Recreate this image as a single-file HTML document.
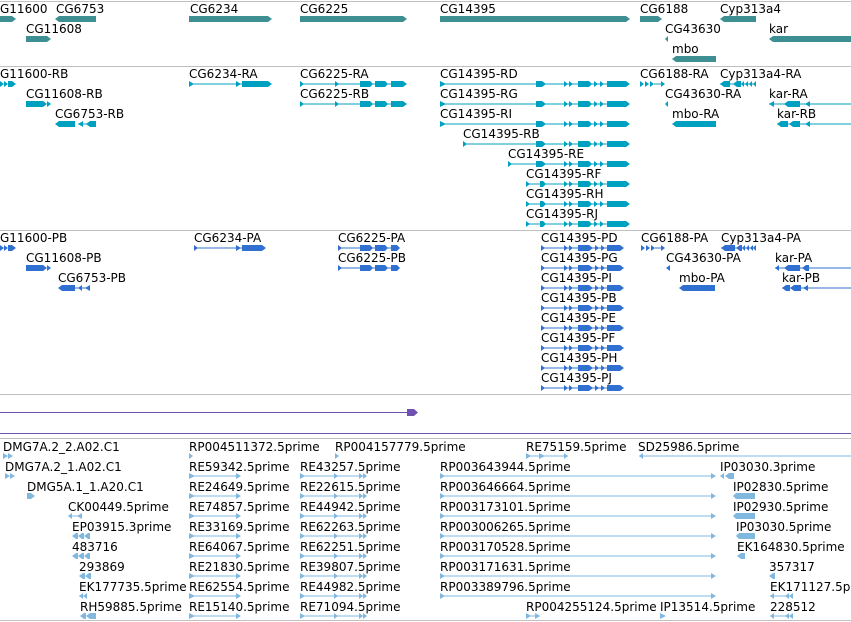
<!DOCTYPE html>
<html><head><meta charset="utf-8"><style>
html,body{margin:0;padding:0;background:#fff;width:851px;height:622px;overflow:hidden}
svg{display:block}
text{font-family:"DejaVu Sans","Liberation Sans",sans-serif;font-size:12px;fill:#000}
</style></head><body>
<svg width="851" height="622" viewBox="0 0 851 622" xmlns="http://www.w3.org/2000/svg">
<!-- dividers -->
<g fill="#c0c0c0">
<rect x="0" y="1" width="851" height="1"/>
<rect x="0" y="66" width="851" height="1"/>
<rect x="0" y="230" width="851" height="1"/>
<rect x="0" y="394" width="851" height="1"/>
<rect x="0" y="438" width="851" height="1"/>
<rect x="0" y="620" width="851" height="1"/>
</g>
<rect x="0" y="433" width="851" height="1" fill="#7050b0"/>

<!-- TRACK 1 genes -->
<g fill="#3d8f91">
<polygon points="0,16 12,16 16,19 12,22 0,22"/>
<polygon points="55,19 59,16 96,16 96,22 59,22"/>
<polygon points="189,16 268,16 272,19 268,22 189,22"/>
<polygon points="300,16 403,16 407,19 403,22 300,22"/>
<polygon points="440,16 626,16 630,19 626,22 440,22"/>
<polygon points="640,16 658,16 662,19 658,22 640,22"/>
<polygon points="720,19 724,16 756,16 756,22 724,22"/>
<polygon points="26,36 47,36 51,39 47,42 26,42"/>
<polygon points="665,39 668,36 668,42"/>
<polygon points="769,39 773,36 851,36 851,42 773,42"/>
<polygon points="672,59 676,56 716,56 716,62 676,62"/>
</g>
<g>
<text x="0" y="13">G11600</text><text x="56" y="13">CG6753</text><text x="190" y="13">CG6234</text>
<text x="300" y="13">CG6225</text><text x="440" y="13">CG14395</text><text x="640" y="13">CG6188</text>
<text x="720" y="13">Cyp313a4</text>
<text x="26" y="33">CG11608</text><text x="665" y="33">CG43630</text><text x="769" y="33">kar</text>
<text x="672" y="53">mbo</text>
</g>

<!-- TRACK 2 transcripts -->
<g fill="#00a0c0" stroke="none">
<!-- row 84 -->
<g transform="translate(0,84)">
<polygon points="0,-3 4,0 0,3"/><polygon points="4,-3 8,0 4,3"/><polygon points="8,-3 12,-3 16,0 12,3 8,3"/>
<rect x="189" y="-0.5" width="80" height="1"/><polygon points="189,-3 194,0 189,3"/><polygon points="236,-3 241,0 236,3"/><polygon points="242,-3 268,-3 272,0 268,3 242,3"/>
</g>
<g transform="translate(0,104)">
<polygon points="26,-3 43,-3 47,0 43,3 26,3"/><polygon points="47,-3 51,0 47,3"/>
</g>
<g transform="translate(0,124)">
<polygon points="55,0 59,-3 75,-3 75,3 59,3"/><polygon points="78,0 83,-3 83,3"/><rect x="78" y="-0.5" width="18" height="1"/><polygon points="86,0 90,-3 96,-3 96,3 90,3"/>
</g>
<!-- CG6225-RA / RB -->
<g transform="translate(0,84)"><rect x="300" y="-0.5" width="105" height="1"/><polygon points="300,-3 304,0 300,3"/><polygon points="335,-3 339,0 335,3"/><polygon points="360,-3 370,-3 373,0 370,3 360,3"/><polygon points="375,-3 385,-3 388,0 385,3 375,3"/><polygon points="391,-3 403,-3 407,0 403,3 391,3"/></g>
<g transform="translate(0,104)"><rect x="300" y="-0.5" width="105" height="1"/><polygon points="300,-3 304,0 300,3"/><polygon points="335,-3 339,0 335,3"/><polygon points="360,-3 370,-3 373,0 370,3 360,3"/><polygon points="375,-3 385,-3 388,0 385,3 375,3"/><polygon points="391,-3 403,-3 407,0 403,3 391,3"/></g>
<!-- CG14395 R-rows -->
<g transform="translate(0,84)"><rect x="440" y="-0.5" width="188" height="1"/><polygon points="440,-3 446,0 440,3"/><polygon points="536,-3 542,-3 546,0 542,3 536,3"/><polygon points="564,-3 568,0 564,3"/><polygon points="569,-3 573,0 569,3"/><polygon points="578,-3 589,-3 592,0 589,3 578,3"/><polygon points="594,-3 598,0 594,3"/><polygon points="600,-3 604,0 600,3"/><polygon points="607,-3 626,-3 630,0 626,3 607,3"/></g>
<g transform="translate(0,104)"><rect x="440" y="-0.5" width="188" height="1"/><polygon points="440,-3 446,0 440,3"/><polygon points="536,-3 542,-3 546,0 542,3 536,3"/><polygon points="564,-3 568,0 564,3"/><polygon points="569,-3 573,0 569,3"/><polygon points="578,-3 589,-3 592,0 589,3 578,3"/><polygon points="594,-3 598,0 594,3"/><polygon points="600,-3 604,0 600,3"/><polygon points="607,-3 626,-3 630,0 626,3 607,3"/></g>
<g transform="translate(0,124)"><rect x="440" y="-0.5" width="188" height="1"/><polygon points="440,-3 446,0 440,3"/><polygon points="536,-3 542,-3 546,0 542,3 536,3"/><polygon points="564,-3 568,0 564,3"/><polygon points="569,-3 573,0 569,3"/><polygon points="578,-3 589,-3 592,0 589,3 578,3"/><polygon points="594,-3 598,0 594,3"/><polygon points="600,-3 604,0 600,3"/><polygon points="607,-3 626,-3 630,0 626,3 607,3"/></g>
<g transform="translate(0,144)"><rect x="463" y="-0.5" width="165" height="1"/><polygon points="463,-3 467,0 463,3"/><polygon points="536,-3 542,-3 546,0 542,3 536,3"/><polygon points="564,-3 568,0 564,3"/><polygon points="569,-3 573,0 569,3"/><polygon points="578,-3 589,-3 592,0 589,3 578,3"/><polygon points="594,-3 598,0 594,3"/><polygon points="600,-3 604,0 600,3"/><polygon points="607,-3 626,-3 630,0 626,3 607,3"/></g>
<g transform="translate(0,164)"><rect x="508" y="-0.5" width="120" height="1"/><polygon points="508,-3 512,0 508,3"/><polygon points="536,-3 542,-3 546,0 542,3 536,3"/><polygon points="564,-3 568,0 564,3"/><polygon points="569,-3 573,0 569,3"/><polygon points="578,-3 589,-3 592,0 589,3 578,3"/><polygon points="594,-3 598,0 594,3"/><polygon points="600,-3 604,0 600,3"/><polygon points="607,-3 626,-3 630,0 626,3 607,3"/></g>
<g transform="translate(0,184)"><rect x="526" y="-0.5" width="102" height="1"/><polygon points="526,-3 530,0 526,3"/><polygon points="540,-3 543,-3 546,0 543,3 540,3"/><polygon points="564,-3 568,0 564,3"/><polygon points="569,-3 573,0 569,3"/><polygon points="578,-3 589,-3 592,0 589,3 578,3"/><polygon points="594,-3 598,0 594,3"/><polygon points="600,-3 604,0 600,3"/><polygon points="607,-3 626,-3 630,0 626,3 607,3"/></g>
<g transform="translate(0,204)"><rect x="526" y="-0.5" width="102" height="1"/><polygon points="526,-3 530,0 526,3"/><polygon points="540,-3 543,-3 546,0 543,3 540,3"/><polygon points="564,-3 568,0 564,3"/><polygon points="569,-3 573,0 569,3"/><polygon points="578,-3 589,-3 592,0 589,3 578,3"/><polygon points="594,-3 598,0 594,3"/><polygon points="600,-3 604,0 600,3"/><polygon points="607,-3 626,-3 630,0 626,3 607,3"/></g>
<g transform="translate(0,224)"><rect x="526" y="-0.5" width="102" height="1"/><polygon points="526,-3 530,0 526,3"/><polygon points="540,-3 543,-3 546,0 543,3 540,3"/><polygon points="564,-3 568,0 564,3"/><polygon points="569,-3 573,0 569,3"/><polygon points="578,-3 589,-3 592,0 589,3 578,3"/><polygon points="594,-3 598,0 594,3"/><polygon points="600,-3 604,0 600,3"/><polygon points="607,-3 626,-3 630,0 626,3 607,3"/></g>
<!-- right side -->
<g transform="translate(0,84)"><polygon points="640,-3 644,0 640,3"/><polygon points="645,-3 649,0 645,3"/><polygon points="650,-3 654,0 650,3"/><rect x="654" y="-0.5" width="8" height="1"/><polygon points="661,-3 665,0 661,3"/>
<polygon points="720,0 724,-3 730,-3 730,3 724,3"/><rect x="720" y="-0.5" width="36" height="1"/><polygon points="733,0 737,-3 741,-3 741,3 737,3"/><polygon points="741,0 744,-3 744,3"/><polygon points="745,0 748,-3 748,3"/><polygon points="749,0 752,-3 752,3"/><polygon points="753,0 756,-3 756,3"/></g>
<g transform="translate(0,104)"><polygon points="665,0 668,-3 668,3"/><rect x="769" y="-0.5" width="82" height="1"/><polygon points="769,0 774,-3 774,3"/><polygon points="784,0 788,-3 800,-3 800,3 788,3"/><polygon points="805,0 810,-3 810,3"/></g>
<g transform="translate(0,124)"><polygon points="672,0 676,-3 716,-3 716,3 676,3"/><rect x="777" y="-0.5" width="74" height="1"/><polygon points="777,0 781,-3 788,-3 788,3 781,3"/><polygon points="789,0 793,-3 800,-3 800,3 793,3"/><polygon points="805,0 810,-3 810,3"/></g>
</g>
<g>
<text x="0" y="78">G11600-RB</text><text x="189" y="78">CG6234-RA</text><text x="300" y="78">CG6225-RA</text><text x="440" y="78">CG14395-RD</text><text x="640" y="78">CG6188-RA</text><text x="720" y="78">Cyp313a4-RA</text>
<text x="26" y="98">CG11608-RB</text><text x="300" y="98">CG6225-RB</text><text x="440" y="98">CG14395-RG</text><text x="665" y="98">CG43630-RA</text><text x="769" y="98">kar-RA</text>
<text x="55" y="118">CG6753-RB</text><text x="440" y="118">CG14395-RI</text><text x="672" y="118">mbo-RA</text><text x="777" y="118">kar-RB</text>
<text x="463" y="138">CG14395-RB</text>
<text x="508" y="158">CG14395-RE</text>
<text x="526" y="178">CG14395-RF</text>
<text x="526" y="198">CG14395-RH</text>
<text x="526" y="218">CG14395-RJ</text>
</g>

<!-- TRACK 3 proteins -->
<g fill="#3070d0">
<g transform="translate(0,248)"><polygon points="0,-3 4,0 0,3"/><polygon points="4,-3 8,0 4,3"/><polygon points="8,-3 12,-3 16,0 12,3 8,3"/>
<rect x="194" y="-0.5" width="70" height="1"/><polygon points="194,-3 198,0 194,3"/><polygon points="236,-3 241,0 236,3"/><polygon points="242,-3 262,-3 266,0 262,3 242,3"/>
<rect x="338" y="-0.5" width="60" height="1"/><polygon points="338,-3 342,0 338,3"/><polygon points="360,-3 370,-3 373,0 370,3 360,3"/><polygon points="375,-3 385,-3 388,0 385,3 375,3"/><polygon points="391,-3 397,-3 400,0 397,3 391,3"/>
<polygon points="641,-3 645,0 641,3"/><polygon points="646,-3 650,0 646,3"/><polygon points="651,-3 655,0 651,3"/><rect x="655" y="-0.5" width="8" height="1"/><polygon points="661,-3 665,0 661,3"/>
<polygon points="721,0 725,-3 735,-3 735,3 725,3"/><rect x="721" y="-0.5" width="35" height="1"/><polygon points="736,0 740,-3 742,-3 742,3 740,3"/><polygon points="742,0 745,-3 745,3"/><polygon points="746,0 749,-3 749,3"/><polygon points="750,0 753,-3 753,3"/><polygon points="753,0 756,-3 756,3"/></g>
<g transform="translate(0,268)"><polygon points="26,-3 43,-3 47,0 43,3 26,3"/><polygon points="47,-3 51,0 47,3"/>
<rect x="338" y="-0.5" width="60" height="1"/><polygon points="338,-3 342,0 338,3"/><polygon points="360,-3 370,-3 373,0 370,3 360,3"/><polygon points="375,-3 385,-3 388,0 385,3 375,3"/><polygon points="391,-3 397,-3 400,0 397,3 391,3"/>
<polygon points="666,0 670,-3 670,3"/>
<rect x="775" y="-0.5" width="76" height="1"/><polygon points="775,0 779,-3 779,3"/><polygon points="784,0 788,-3 800,-3 800,3 788,3"/><polygon points="802,0 806,-3 809,-3 809,3 806,3"/></g>
<g transform="translate(0,288)"><polygon points="58,0 62,-3 75,-3 75,3 62,3"/><rect x="75" y="-0.5" width="15" height="1"/><polygon points="78,0 82,-3 82,3"/><polygon points="85,0 90,-3 90,3"/>
<polygon points="679,0 683,-3 715,-3 715,3 683,3"/>
<rect x="782" y="-0.5" width="69" height="1"/><polygon points="782,0 786,-3 790,-3 790,3 786,3"/><polygon points="790,0 794,-3 801,-3 801,3 794,3"/><polygon points="803,0 808,-3 808,3"/></g>
<!-- CG14395-P rows -->
<g transform="translate(0,248)"><rect x="541" y="-0.5" width="82" height="1"/><polygon points="541,-3 545,0 541,3"/><polygon points="564,-3 568,0 564,3"/><polygon points="569,-3 573,0 569,3"/><polygon points="578,-3 589,-3 593,0 589,3 578,3"/><polygon points="595,-3 599,0 595,3"/><polygon points="601,-3 605,0 601,3"/><polygon points="607,-3 620,-3 624,0 620,3 607,3"/></g>
<g transform="translate(0,268)"><rect x="541" y="-0.5" width="82" height="1"/><polygon points="541,-3 545,0 541,3"/><polygon points="564,-3 568,0 564,3"/><polygon points="569,-3 573,0 569,3"/><polygon points="578,-3 589,-3 593,0 589,3 578,3"/><polygon points="595,-3 599,0 595,3"/><polygon points="601,-3 605,0 601,3"/><polygon points="607,-3 620,-3 624,0 620,3 607,3"/></g>
<g transform="translate(0,288)"><rect x="541" y="-0.5" width="82" height="1"/><polygon points="541,-3 545,0 541,3"/><polygon points="564,-3 568,0 564,3"/><polygon points="569,-3 573,0 569,3"/><polygon points="578,-3 589,-3 593,0 589,3 578,3"/><polygon points="595,-3 599,0 595,3"/><polygon points="601,-3 605,0 601,3"/><polygon points="607,-3 620,-3 624,0 620,3 607,3"/></g>
<g transform="translate(0,308)"><rect x="541" y="-0.5" width="82" height="1"/><polygon points="541,-3 545,0 541,3"/><polygon points="564,-3 568,0 564,3"/><polygon points="569,-3 573,0 569,3"/><polygon points="578,-3 589,-3 593,0 589,3 578,3"/><polygon points="595,-3 599,0 595,3"/><polygon points="601,-3 605,0 601,3"/><polygon points="607,-3 620,-3 624,0 620,3 607,3"/></g>
<g transform="translate(0,328)"><rect x="541" y="-0.5" width="82" height="1"/><polygon points="541,-3 545,0 541,3"/><polygon points="564,-3 568,0 564,3"/><polygon points="569,-3 573,0 569,3"/><polygon points="578,-3 589,-3 593,0 589,3 578,3"/><polygon points="595,-3 599,0 595,3"/><polygon points="601,-3 605,0 601,3"/><polygon points="607,-3 620,-3 624,0 620,3 607,3"/></g>
<g transform="translate(0,348)"><rect x="541" y="-0.5" width="82" height="1"/><polygon points="541,-3 545,0 541,3"/><polygon points="564,-3 568,0 564,3"/><polygon points="569,-3 573,0 569,3"/><polygon points="578,-3 589,-3 593,0 589,3 578,3"/><polygon points="595,-3 599,0 595,3"/><polygon points="601,-3 605,0 601,3"/><polygon points="607,-3 620,-3 624,0 620,3 607,3"/></g>
<g transform="translate(0,368)"><rect x="541" y="-0.5" width="82" height="1"/><polygon points="541,-3 545,0 541,3"/><polygon points="564,-3 568,0 564,3"/><polygon points="569,-3 573,0 569,3"/><polygon points="578,-3 589,-3 593,0 589,3 578,3"/><polygon points="595,-3 599,0 595,3"/><polygon points="601,-3 605,0 601,3"/><polygon points="607,-3 620,-3 624,0 620,3 607,3"/></g>
<g transform="translate(0,388)"><rect x="541" y="-0.5" width="82" height="1"/><polygon points="541,-3 545,0 541,3"/><polygon points="564,-3 568,0 564,3"/><polygon points="569,-3 573,0 569,3"/><polygon points="578,-3 589,-3 593,0 589,3 578,3"/><polygon points="595,-3 599,0 595,3"/><polygon points="601,-3 605,0 601,3"/><polygon points="607,-3 620,-3 624,0 620,3 607,3"/></g>
</g>
<g>
<text x="0" y="242">G11600-PB</text><text x="194" y="242">CG6234-PA</text><text x="338" y="242">CG6225-PA</text><text x="541" y="242">CG14395-PD</text><text x="641" y="242">CG6188-PA</text><text x="721" y="242">Cyp313a4-PA</text>
<text x="26" y="262">CG11608-PB</text><text x="338" y="262">CG6225-PB</text><text x="541" y="262">CG14395-PG</text><text x="666" y="262">CG43630-PA</text><text x="775" y="262">kar-PA</text>
<text x="58" y="282">CG6753-PB</text><text x="541" y="282">CG14395-PI</text><text x="679" y="282">mbo-PA</text><text x="782" y="282">kar-PB</text>
<text x="541" y="302">CG14395-PB</text>
<text x="541" y="322">CG14395-PE</text>
<text x="541" y="342">CG14395-PF</text>
<text x="541" y="362">CG14395-PH</text>
<text x="541" y="382">CG14395-PJ</text>
</g>

<!-- TRACK 4 -->
<g fill="#7050b0"><rect x="0" y="412" width="408" height="1"/><polygon points="407,409 414,409 418,412.5 414,416 407,416"/></g>

<!-- TRACK 5 ESTs -->
<g fill="#80b8e0">
<!-- row 456 -->
<g transform="translate(0,456)"><polygon points="3,-3 8,0 3,3"/><polygon points="8,-3 13,0 8,3"/>
<polygon points="189,-3 193,0 189,3"/><polygon points="335,-3 339,0 335,3"/>
<rect x="526" y="-0.5" width="42" height="1"/><polygon points="526,-3 531,0 526,3"/><polygon points="539,-3 545,0 539,3"/><polygon points="564,-3 568,0 564,3"/>
<rect x="639" y="-0.5" width="212" height="1"/><polygon points="639,0 643,-3 643,3"/></g>
<g transform="translate(0,476)"><polygon points="5,-3 10,0 5,3"/><polygon points="10,-3 15,0 10,3"/></g>
<g transform="translate(0,496)"><polygon points="27,-3 31,-3 35,0 31,3 27,3"/></g>
<g transform="translate(0,516)"><rect x="68" y="-0.5" width="14" height="1"/><polygon points="68,0 72,-3 72,3"/><polygon points="77,0 82,-3 82,3"/></g>
<g transform="translate(0,536)"><polygon points="72,0 76,-3 78,-3 78,3 76,3"/><polygon points="78,0 82,-3 84,-3 84,3 82,3"/><polygon points="84,0 88,-3 90,-3 90,3 88,3"/></g>
<g transform="translate(0,556)"><polygon points="72,0 76,-3 78,-3 78,3 76,3"/><polygon points="78,0 82,-3 84,-3 84,3 82,3"/><polygon points="84,0 88,-3 90,-3 90,3 88,3"/></g>
<g transform="translate(0,576)"><polygon points="79,0 83,-3 85,-3 85,3 83,3"/><polygon points="85,0 89,-3 91,-3 91,3 89,3"/></g>
<g transform="translate(0,596)"><polygon points="79,0 83,-3 83,3"/><rect x="79" y="-0.5" width="8" height="1"/><polygon points="83,0 87,-3 87,3"/></g>
<g transform="translate(0,616)"><polygon points="80,0 84,-3 86,-3 86,3 84,3"/><polygon points="86,0 90,-3 96,-3 96,3 90,3"/></g>
<!-- RE columns rows 476..616 -->
<g transform="translate(0,476)"><rect x="189" y="-0.5" width="51" height="1"/><polygon points="189,-3 195,0 189,3"/><polygon points="236,-3 241,0 236,3"/><rect x="300" y="-0.5" width="66" height="1"/><polygon points="300,-3 305,0 300,3"/><polygon points="334,-3 338,0 334,3"/><polygon points="359,-3 363,0 359,3"/><polygon points="363,-3 367,0 363,3"/></g>
<g transform="translate(0,496)"><rect x="189" y="-0.5" width="51" height="1"/><polygon points="189,-3 195,0 189,3"/><polygon points="236,-3 241,0 236,3"/><rect x="300" y="-0.5" width="66" height="1"/><polygon points="300,-3 305,0 300,3"/><polygon points="334,-3 338,0 334,3"/><polygon points="359,-3 363,0 359,3"/><polygon points="363,-3 367,0 363,3"/></g>
<g transform="translate(0,516)"><rect x="189" y="-0.5" width="51" height="1"/><polygon points="189,-3 195,0 189,3"/><polygon points="236,-3 241,0 236,3"/><rect x="300" y="-0.5" width="66" height="1"/><polygon points="300,-3 305,0 300,3"/><polygon points="334,-3 338,0 334,3"/><polygon points="359,-3 363,0 359,3"/><polygon points="363,-3 367,0 363,3"/></g>
<g transform="translate(0,536)"><rect x="189" y="-0.5" width="51" height="1"/><polygon points="189,-3 195,0 189,3"/><polygon points="236,-3 241,0 236,3"/><rect x="300" y="-0.5" width="66" height="1"/><polygon points="300,-3 305,0 300,3"/><polygon points="334,-3 338,0 334,3"/><polygon points="359,-3 363,0 359,3"/><polygon points="363,-3 367,0 363,3"/></g>
<g transform="translate(0,556)"><rect x="189" y="-0.5" width="51" height="1"/><polygon points="189,-3 195,0 189,3"/><polygon points="236,-3 241,0 236,3"/><rect x="300" y="-0.5" width="66" height="1"/><polygon points="300,-3 305,0 300,3"/><polygon points="334,-3 338,0 334,3"/><polygon points="359,-3 363,0 359,3"/><polygon points="363,-3 367,0 363,3"/></g>
<g transform="translate(0,576)"><rect x="189" y="-0.5" width="51" height="1"/><polygon points="189,-3 195,0 189,3"/><polygon points="236,-3 241,0 236,3"/><rect x="300" y="-0.5" width="66" height="1"/><polygon points="300,-3 305,0 300,3"/><polygon points="334,-3 338,0 334,3"/><polygon points="359,-3 363,0 359,3"/><polygon points="363,-3 367,0 363,3"/></g>
<g transform="translate(0,596)"><rect x="189" y="-0.5" width="51" height="1"/><polygon points="189,-3 195,0 189,3"/><polygon points="236,-3 241,0 236,3"/><rect x="300" y="-0.5" width="66" height="1"/><polygon points="300,-3 305,0 300,3"/><polygon points="334,-3 338,0 334,3"/><polygon points="359,-3 363,0 359,3"/><polygon points="363,-3 367,0 363,3"/></g>
<g transform="translate(0,616)"><rect x="189" y="-0.5" width="51" height="1"/><polygon points="189,-3 195,0 189,3"/><polygon points="236,-3 241,0 236,3"/><rect x="300" y="-0.5" width="66" height="1"/><polygon points="300,-3 305,0 300,3"/><polygon points="334,-3 338,0 334,3"/><polygon points="359,-3 363,0 359,3"/><polygon points="363,-3 367,0 363,3"/></g>
<!-- RP long rows -->
<g transform="translate(0,476)"><rect x="440" y="-0.5" width="275" height="1"/><polygon points="440,-3 445,0 440,3"/><polygon points="711,-3 716,0 711,3"/></g>
<g transform="translate(0,496)"><rect x="440" y="-0.5" width="275" height="1"/><polygon points="440,-3 445,0 440,3"/><polygon points="711,-3 716,0 711,3"/></g>
<g transform="translate(0,516)"><rect x="440" y="-0.5" width="275" height="1"/><polygon points="440,-3 445,0 440,3"/><polygon points="711,-3 716,0 711,3"/></g>
<g transform="translate(0,536)"><rect x="440" y="-0.5" width="275" height="1"/><polygon points="440,-3 445,0 440,3"/><polygon points="711,-3 716,0 711,3"/></g>
<g transform="translate(0,556)"><rect x="440" y="-0.5" width="275" height="1"/><polygon points="440,-3 445,0 440,3"/><polygon points="711,-3 716,0 711,3"/></g>
<g transform="translate(0,576)"><rect x="440" y="-0.5" width="275" height="1"/><polygon points="440,-3 445,0 440,3"/><polygon points="711,-3 716,0 711,3"/></g>
<g transform="translate(0,596)"><rect x="440" y="-0.5" width="275" height="1"/><polygon points="440,-3 445,0 440,3"/><polygon points="711,-3 716,0 711,3"/></g>
<g transform="translate(0,616)"><rect x="526" y="-0.5" width="14" height="1"/><polygon points="526,-3 531,0 526,3"/><polygon points="535,-3 540,0 535,3"/><polygon points="660,-3 666,0 660,3"/></g>
<!-- right ESTs -->
<g transform="translate(0,476)"><polygon points="720,0 724,-3 724,3"/><polygon points="725,0 729,-3 734,-3 734,3 729,3"/></g>
<g transform="translate(0,496)"><polygon points="733,0 736,-3 755,-3 755,3 736,3"/></g>
<g transform="translate(0,516)"><polygon points="733,0 736,-3 755,-3 755,3 736,3"/></g>
<g transform="translate(0,536)"><polygon points="736,0 739,-3 755,-3 755,3 739,3"/></g>
<g transform="translate(0,556)"><polygon points="737,0 741,-3 745,-3 745,3 741,3"/></g>
<g transform="translate(0,576)"><polygon points="769,0 773,-3 775,-3 775,3 773,3"/></g>
<g transform="translate(0,596)"><rect x="770" y="-0.5" width="23" height="1"/><polygon points="770,0 774,-3 774,3"/><polygon points="785,0 789,-3 789,3"/><polygon points="789,0 793,-3 793,3"/></g>
<g transform="translate(0,616)"><rect x="770" y="-0.5" width="23" height="1"/><polygon points="770,0 774,-3 774,3"/><polygon points="785,0 789,-3 789,3"/><polygon points="789,0 793,-3 793,3"/></g>
</g>
<g>
<text x="3" y="451">DMG7A.2_2.A02.C1</text><text x="189" y="451">RP004511372.5prime</text><text x="335" y="451">RP004157779.5prime</text><text x="526" y="451">RE75159.5prime</text><text x="638" y="451">SD25986.5prime</text>
<text x="5" y="471">DMG7A.2_1.A02.C1</text><text x="189" y="471">RE59342.5prime</text><text x="300" y="471">RE43257.5prime</text><text x="440" y="471">RP003643944.5prime</text><text x="720" y="471">IP03030.3prime</text>
<text x="27" y="491">DMG5A.1_1.A20.C1</text><text x="189" y="491">RE24649.5prime</text><text x="300" y="491">RE22615.5prime</text><text x="440" y="491">RP003646664.5prime</text><text x="733" y="491">IP02830.5prime</text>
<text x="68" y="511">CK00449.5prime</text><text x="189" y="511">RE74857.5prime</text><text x="300" y="511">RE44942.5prime</text><text x="440" y="511">RP003173101.5prime</text><text x="733" y="511">IP02930.5prime</text>
<text x="72" y="531">EP03915.3prime</text><text x="189" y="531">RE33169.5prime</text><text x="300" y="531">RE62263.5prime</text><text x="440" y="531">RP003006265.5prime</text><text x="736" y="531">IP03030.5prime</text>
<text x="72" y="551">483716</text><text x="189" y="551">RE64067.5prime</text><text x="300" y="551">RE62251.5prime</text><text x="440" y="551">RP003170528.5prime</text><text x="737" y="551">EK164830.5prime</text>
<text x="79" y="571">293869</text><text x="189" y="571">RE21830.5prime</text><text x="300" y="571">RE39807.5prime</text><text x="440" y="571">RP003171631.5prime</text><text x="769" y="571">357317</text>
<text x="79" y="591">EK177735.5prime</text><text x="189" y="591">RE62554.5prime</text><text x="300" y="591">RE44982.5prime</text><text x="440" y="591">RP003389796.5prime</text><text x="770" y="591">EK171127.5prime</text>
<text x="80" y="611">RH59885.5prime</text><text x="189" y="611">RE15140.5prime</text><text x="300" y="611">RE71094.5prime</text><text x="526" y="611">RP004255124.5prime</text><text x="660" y="611">IP13514.5prime</text><text x="770" y="611">228512</text>
</g>
</svg>
</body></html>
